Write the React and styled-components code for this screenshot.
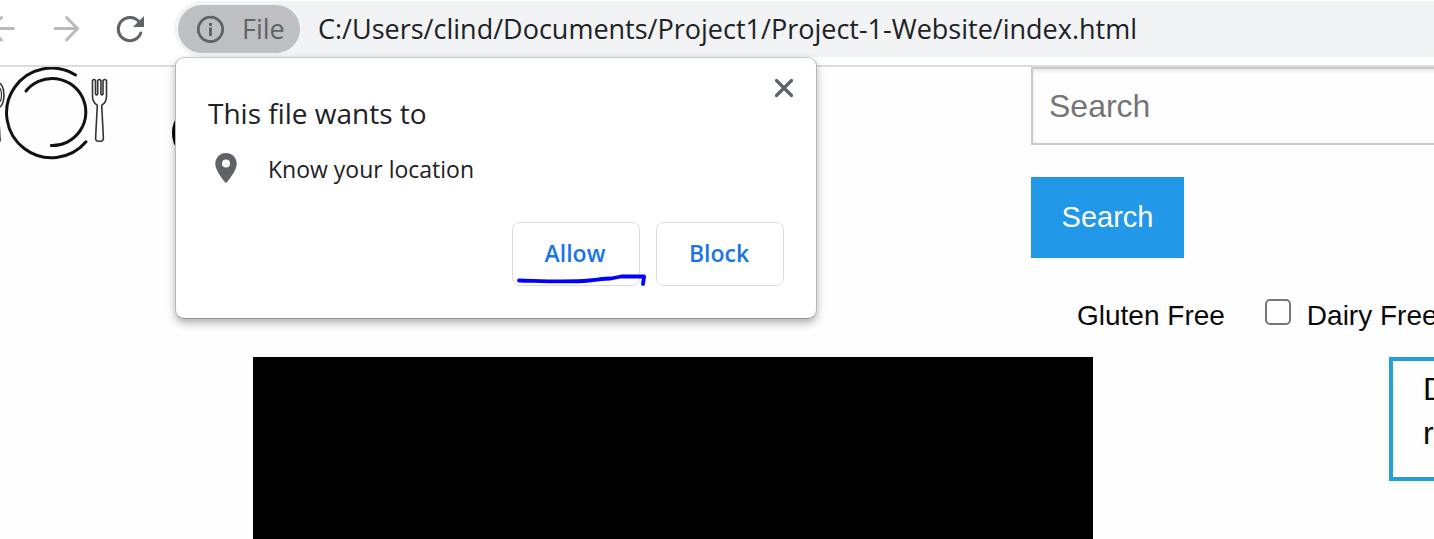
import React from "react";
import styled, { createGlobalStyle } from "styled-components";

const GlobalStyle = createGlobalStyle`
  *, *::before, *::after { box-sizing: border-box; }
  body {
    margin: 0;
    background: #fefefe;
    color: #0a0a0a;
    font-family: "Liberation Sans", Arial, sans-serif;
    overflow: hidden;
  }
`;

const uiFont = `"Open Sans", "Noto Sans", sans-serif`;

const Browser = styled.div`
  position: relative;
  display: flex;
  flex-direction: column;
  min-height: 100vh;
  overflow: hidden;
`;

const Toolbar = styled.header`
  display: flex;
  align-items: flex-start;
  padding-top: 1px;
  height: 67px;
  background: #fff;
  border-bottom: 2px solid #dadce0;
  font-family: ${uiFont};
`;

const NavButtons = styled.nav`
  display: flex;
  flex: none;
  width: 174px;
  height: 56px;
`;

const IconButton = styled.button`
  display: flex;
  align-items: center;
  justify-content: center;
  flex: none;
  width: ${(p) => p.$width || 64}px;
  padding: 0;
  border: 0;
  background: none;
  color: ${(p) => (p.$muted ? "#babbbd" : "#5f6368")};
`;

const Omnibox = styled.div`
  display: flex;
  align-items: center;
  flex: 1;
  min-width: 0;
  height: 56px;
  padding-left: 4px;
  border-radius: 28px 0 0 28px;
  background: #f1f3f4;
`;

const FileChip = styled.button`
  display: flex;
  align-items: center;
  gap: 16px;
  flex: none;
  width: 122px;
  height: 48px;
  padding: 0 0 0 18px;
  border: 0;
  border-radius: 24px;
  background: #bebfc1;
  color: #5f6368;
  font: 27px/40px ${uiFont};
`;

const Address = styled.input`
  flex: 1;
  min-width: 0;
  height: 46px;
  margin-bottom: 2px;
  padding: 0 0 0 18px;
  border: 0;
  outline: 0;
  background: none;
  color: #202124;
  font: 27px/40px ${uiFont};
`;

const PageTop = styled.div`
  display: grid;
  grid-template-columns: minmax(0, 1fr) 403px;
  height: 290px;
`;

const Brand = styled.div`
  display: flex;
  align-items: flex-start;
  gap: 64px;
`;

const SearchForm = styled.form`
  display: flex;
  flex-direction: column;
  align-items: flex-start;
  overflow: hidden;
`;

const SearchInput = styled.input`
  width: calc(100% + 40px);
  height: 78px;
  margin-bottom: 32px;
  padding: 0 16px;
  border: 2px solid #cacaca;
  border-radius: 0;
  background: #fefefe;
  box-shadow: inset 0 2px 4px rgba(10, 10, 10, 0.1);
  font: 32px/48px "Liberation Sans", Arial, sans-serif;
  &::placeholder { color: #757575; opacity: 1; }
`;

const SearchButton = styled.button`
  width: 153px;
  height: 81px;
  padding: 0 0 2px;
  border: 0;
  background: #2199e8;
  color: #fefefe;
  font: 29px/32px "Liberation Sans", Arial, sans-serif;
`;

const Filters = styled.div`
  display: flex;
  align-items: center;
  margin-top: 32px;
  padding-left: 46px;
  font-size: 28px;
  line-height: 52px;
  white-space: nowrap;
`;

const FilterLabel = styled.label`
  display: flex;
  align-items: center;
`;

const Checkbox = styled.input`
  appearance: none;
  flex: none;
  width: 26px;
  height: 26px;
  margin: 0 16px 8px 40px;
  border: 2px solid #767676;
  border-radius: 5px;
  background: #fff;
`;

const Content = styled.main`
  display: flex;
  justify-content: space-between;
  align-items: flex-start;
  flex: 1;
  padding-left: 253px;
`;

const Hero = styled.section`
  align-self: stretch;
  flex: 1;
  margin-right: 296px;
  background: #000;
`;

const Results = styled.aside`
  flex: none;
  width: 45px;
  height: 124px;
  padding: 6px 0 0 30px;
  border: 4px solid #259fd9;
  border-right: 0;
  overflow: hidden;
  font-size: 32px;
  line-height: 44px;
`;

const ResultLine = styled.p`
  margin: 0;
`;

const Prompt = styled.div`
  position: absolute;
  top: 57px;
  left: 175px;
  width: 642px;
  padding: 31px 32px 32px;
  border: 1px solid #b4b6b8;
  border-top-color: #c6c8ca;
  border-bottom-color: #929496;
  border-radius: 9px;
  background: #fff;
  color: #202124;
  box-shadow: 0 4px 8px rgba(0, 0, 0, 0.3);
  font-family: ${uiFont};
`;

const PromptTitle = styled.h2`
  margin: 0;
  font-size: 28px;
  font-weight: 400;
  line-height: 48px;
`;

const Permission = styled.div`
  display: flex;
  align-items: center;
  gap: 30px;
  height: 32px;
  margin: 15px 0 38px;
  padding-left: 6px;
  font-size: 23px;
  line-height: 32px;
`;

const PermissionText = styled.span`
  padding-top: 2px;
`;

const Actions = styled.div`
  display: flex;
  justify-content: flex-end;
  gap: 16px;
`;

const ActionButton = styled.button`
  position: relative;
  width: 128px;
  height: 64px;
  padding: 0 2px 2px 0;
  border: 1px solid #dadce0;
  border-radius: 8px;
  background: #fff;
  color: #1a73e8;
  font: 600 23px/32px ${uiFont};
`;

const CloseButton = styled.button`
  position: absolute;
  top: 14px;
  right: 16px;
  display: flex;
  padding: 6px;
  border: 0;
  background: none;
  color: #5f6368;
`;

const PenStroke = styled.svg`
  position: absolute;
  top: 48px;
  left: 0;
`;

function Logo() {
  return (
    <svg width="108" height="94" viewBox="0 0 108 94" fill="none" stroke="#111" strokeLinecap="round" role="img" aria-label="Plate and cutlery">
      <path d="M75.500 8A45 44.800 0 1 0 86 74.800" strokeWidth="3" />
      <path d="M26 24A33.600 33.600 0 1 1 51.400 78.600" strokeWidth="3" />
      <g strokeWidth="1.6" stroke="#333" strokeLinejoin="round">
        <path d="M92.500 13.500Q94 11.500 95.500 13.500V27Q96.600 28.800 97.700 27V13.500Q99.300 11.500 100.900 13.500V27Q102 28.800 103 27V13.500Q104.800 11.500 106.500 13.500V29C106.500 34 105 36.500 101.700 38.200L103.400 71C103.600 73.500 102 74.300 99.500 74.300S95.400 73.500 95.600 71L97.300 38.200C94 36.500 92.500 34 92.500 29Z" />
        <path d="M-3 15.500C2 15.500 4 22 4 28S2 41 -3 41" />
        <path d="M-3 19.500C0 20 1.500 24 1.500 28S0 36 -3 36.500M-1.500 42L.3 74" strokeWidth="1.200" />
      </g>
    </svg>
  );
}

export default function App() {
  return (
    <>
      <GlobalStyle />
      <Browser>
        <Toolbar>
          <NavButtons aria-label="Browser">
            <IconButton $width={34} $muted aria-label="Back">
              <svg width="34" height="32" viewBox="0 0 34 32" fill="none" stroke="currentColor" strokeWidth="3" strokeLinecap="round">
                <path d="M13.500 15.500H-9M1.500 4.500L-10 15.500L1.500 27" />
              </svg>
            </IconButton>
            <IconButton $muted aria-label="Forward">
              <svg width="28" height="32" viewBox="0 0 28 32" fill="none" stroke="currentColor" strokeWidth="3" strokeLinecap="round">
                <path d="M3 15.500H25M14.500 4.500L25.500 15.500L14.500 27" />
              </svg>
            </IconButton>
            <IconButton aria-label="Reload">
              <svg width="28" height="28" viewBox="0 0 28 28" fill="none">
                <path d="M24.800 18A11.600 11.600 0 1 1 23.500 7.500" stroke="currentColor" strokeWidth="3" strokeLinecap="round" />
                <path d="M28 1V12H17Z" fill="currentColor" />
              </svg>
            </IconButton>
          </NavButtons>
          <Omnibox>
            <FileChip>
              <svg width="30" height="30" viewBox="0 0 30 30" fill="none" stroke="currentColor" strokeWidth="2.800">
                <circle cx="14.500" cy="15.300" r="12.200" />
                <path d="M13 15H14.500V22M14.500 9V12" strokeWidth="3" />
              </svg>
              File
            </FileChip>
            <Address aria-label="Address" defaultValue="C:/Users/clind/Documents/Project1/Project-1-Website/index.html" />
          </Omnibox>
        </Toolbar>

        <PageTop>
          <Brand>
            <Logo />
            <svg width="44" height="92" viewBox="0 0 44 92" aria-hidden="true">
              <ellipse cx="22" cy="66" rx="22" ry="26" fill="#000" />
            </svg>
          </Brand>
          <SearchForm>
            <SearchInput type="search" placeholder="Search" aria-label="Search" />
            <SearchButton type="button">Search</SearchButton>
            <Filters>
              <span>Gluten Free</span>
              <FilterLabel>
                <Checkbox type="checkbox" />
                Dairy Free
              </FilterLabel>
            </Filters>
          </SearchForm>
        </PageTop>

        <Content>
          <Hero />
          <Results>
            <ResultLine>D</ResultLine>
            <ResultLine>r</ResultLine>
          </Results>
        </Content>

        <Prompt role="dialog" aria-labelledby="prompt-title">
          <PromptTitle id="prompt-title">This file wants to</PromptTitle>
          <Permission>
            <svg width="24" height="32" viewBox="0 0 24 32" fill="#5f6368">
              <path fillRule="evenodd" d="M12 1C6 1 1.300 5.700 1.300 11.700C1.300 19.500 12 31 12 31S22.700 19.500 22.700 11.700C22.700 5.700 18 1 12 1ZM12 7.500A4 4 0 1 1 12 15.500A4 4 0 0 1 12 7.500Z" />
            </svg>
            <PermissionText>Know your location</PermissionText>
          </Permission>
          <Actions>
            <ActionButton>
              Allow
              <PenStroke width="140" height="24" viewBox="0 0 140 24" fill="none" stroke="#0000fe" strokeLinecap="round" strokeLinejoin="round" aria-hidden="true">
                <path d="M6 9.500C28 10 55 11.500 76 9.500C86 8.500 92 7.500 98 7.500L108 5.500H131" strokeWidth="3.800" />
                <path d="M131 6L130 13" strokeWidth="3.800" />
              </PenStroke>
            </ActionButton>
            <ActionButton>Block</ActionButton>
          </Actions>
          <CloseButton aria-label="Close">
            <svg width="20" height="20" viewBox="0 0 20 20" stroke="currentColor" strokeWidth="3.200" strokeLinecap="round">
              <path d="M2.500 2.500L17.500 17.500M17.500 2.500L2.500 17.500" />
            </svg>
          </CloseButton>
        </Prompt>
      </Browser>
    </>
  );
}
